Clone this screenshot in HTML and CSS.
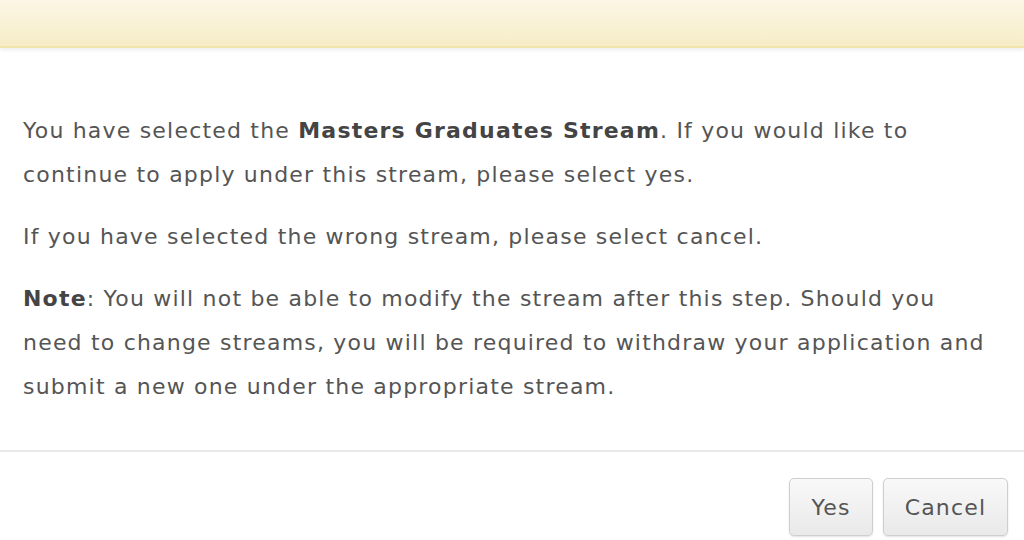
FILE: index.html
```html
<!DOCTYPE html>
<html>
<head>
<meta charset="utf-8">
<link rel="stylesheet" href="styles.css">
</head>
<body>
<div class="dialog">
  <div class="header"></div>
  <div class="content">
    <p>You have selected the <strong>Masters Graduates Stream</strong>. If you would like to continue to apply under this stream, please select yes.</p>
    <p>If you have selected the wrong stream, please select cancel.</p>
    <p><strong>Note</strong>: You will not be able to modify the stream after this step. Should you need to change streams, you will be required to withdraw your application and submit a new one under the appropriate stream.</p>
  </div>
  <div class="footer">
    <button class="btn btn-yes">Yes</button>
    <button class="btn btn-cancel">Cancel</button>
  </div>
</div>
</body>
</html>
```
FILE: styles.css
```css
html, body {
  margin: 0;
  padding: 0;
  background: #ffffff;
}
body {
  font-family: "DejaVu Sans", Verdana, sans-serif;
  color: #555555;
  overflow: hidden;
}
.dialog {
  width: 1024px;
  height: 540px;
  display: flex;
  flex-direction: column;
}
.header {
  height: 46px;
  background: linear-gradient(#fdf6e6, #f6edc6);
  border-bottom: 2px solid #f1e4ad;
  box-shadow: 0 2px 4px rgba(0, 0, 0, 0.07);
  flex: none;
}
.content {
  padding: 61px 30px 0 23px;
  height: 360px;
  box-sizing: border-box;
  flex: none;
}
.content p {
  margin: 0 0 18px 0;
  font-size: 22px;
  letter-spacing: 1.2px;
  line-height: 44px;
}
.content strong {
  color: #444444;
  font-weight: bold;
}
.footer {
  border-top: 2px solid #e8e8e8;
  margin-top: 42px;
  padding: 26px 16px 0 0;
  display: flex;
  justify-content: flex-end;
  gap: 10px;
}
.btn {
  font-family: "DejaVu Sans", Verdana, sans-serif;
  font-size: 22px;
  letter-spacing: 1.2px;
  color: #555555;
  height: 58px;
  padding: 0;
  border: 1px solid #cfcfcf;
  border-radius: 5px;
  background: linear-gradient(#f9f9f9, #e9e9e9);
  box-shadow: 0 1px 2px rgba(0, 0, 0, 0.12);
}
.btn-yes {
  width: 84px;
}
.btn-cancel {
  width: 125px;
}
```
